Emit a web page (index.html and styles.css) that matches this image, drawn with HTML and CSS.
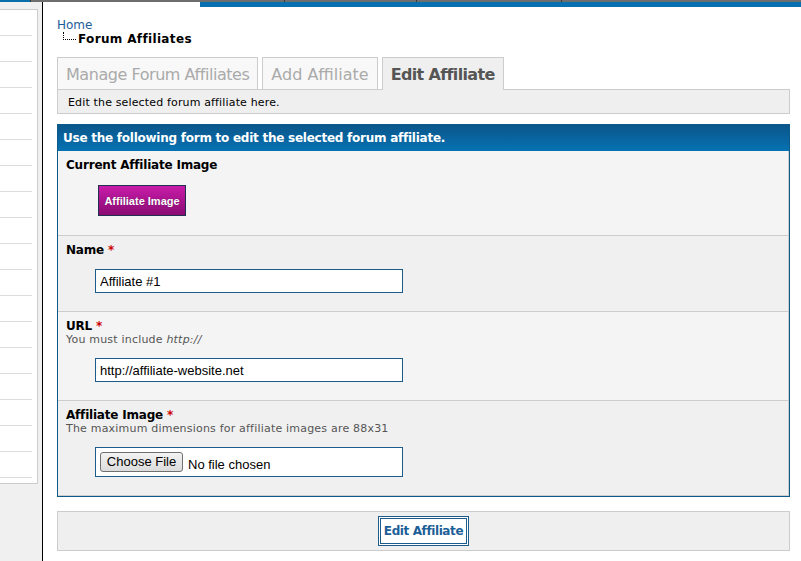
FILE: index.html
```html
<!DOCTYPE html>
<html lang="en">
<head>
<meta charset="utf-8">
<title>Edit Affiliate</title>
<link rel="stylesheet" href="styles.css">
</head>
<body>
<div class="topbar">
  <span class="seg seg-blue"></span><span class="seg seg-a"></span><span class="seg seg-b"></span><span class="seg seg-c"></span><span class="seg seg-d"></span>
</div>
<div class="layout">
  <aside class="sidebar">
    <ul class="side-list">
      <li></li><li></li><li></li><li></li><li></li><li></li>
      <li></li><li></li><li></li><li></li><li></li><li></li>
      <li></li><li></li><li></li><li></li><li></li><li></li>
    </ul>
  </aside>
  <main class="main">
    <div class="band"></div>
    <nav class="breadcrumb">
      <a class="crumb-home" href="#">Home</a>
      <div class="crumb-current"><span class="tree"></span><strong>Forum Affiliates</strong></div>
    </nav>
    <ul class="tabs">
      <li class="tab tab-manage">Manage Forum Affiliates</li>
      <li class="tab">Add Affiliate</li>
      <li class="tab active">Edit Affiliate</li>
    </ul>
    <div class="tab-desc">Edit the selected forum affiliate here.</div>
    <form class="form-box">
      <div class="form-head">Use the following form to edit the selected forum affiliate.</div>
      <div class="row row-light row-first">
        <div class="label">Current Affiliate Image</div>
        <div class="field field-img"><span class="aff-img">Affiliate Image</span></div>
      </div>
      <div class="row row-dark">
        <div class="label">Name <span class="req">*</span></div>
        <div class="field"><input class="text-input" type="text" value="Affiliate #1"></div>
      </div>
      <div class="row row-light">
        <div class="label">URL <span class="req">*</span></div>
        <div class="desc">You must include <em>http://</em></div>
        <div class="field"><input class="text-input" type="text" value="http://affiliate-website.net"></div>
      </div>
      <div class="row row-dark">
        <div class="label">Affiliate Image <span class="req">*</span></div>
        <div class="desc">The maximum dimensions for affiliate images are 88x31</div>
        <div class="field"><div class="file-box"><span class="file-btn">Choose File</span><span class="file-name">No file chosen</span></div></div>
      </div>
    </form>
    <div class="submit-bar"><button class="btn" type="button">Edit Affiliate</button></div>
  </main>
</div>
</body>
</html>
```

FILE: styles.css
```css
html, body {
  margin: 0;
  padding: 0;
  background: #fff;
}
body {
  font-family: "DejaVu Sans", Verdana, sans-serif;
  color: #000;
  height: 561px;
  overflow: hidden;
}

/* top strip */
.topbar {
  display: flex;
  height: 2px;
  background: #6e6e6e;
}
.seg { display: block; height: 2px; }
.seg-blue { width: 30px; background: #0a6eab; }
.seg-a { width: 253px; border-left: 1px solid #3a3a3a; }
.seg-b { width: 131px; border-left: 1px solid #3a3a3a; }
.seg-c { width: 144px; border-left: 1px solid #3a3a3a; }
.seg-d { flex: 1; border-left: 1px solid #3a3a3a; }

.layout {
  display: flex;
  height: 559px;
}

/* sidebar */
.sidebar {
  width: 42px;
  flex: none;
  background: #f0f0f0;
  border-right: 1px solid #000;
}
.side-list {
  list-style: none;
  margin: 7px 0 0;
  padding: 0 5px 5px 0;
  width: 32px;
  background: #fff;
  border: 1px solid #ccc;
  border-left: none;
}
.side-list li {
  height: 25px;
  border-bottom: 1px solid #ddd;
}

/* main */
.main {
  flex: 1;
  position: relative;
  padding: 16px 11px 0 14px;
}
.band {
  position: absolute;
  top: 0;
  right: 0;
  left: 157px;
  height: 5px;
  background: #0670b0;
}

.breadcrumb {
  font-size: 12px;
  line-height: 14px;
}
.crumb-home {
  color: #1b5c9b;
  text-decoration: none;
  display: block;
}
.crumb-current {
  display: flex;
  align-items: flex-start;
}
.tree {
  display: block;
  width: 12px;
  height: 7px;
  margin: 0 2px 0 6px;
  border-left: 1px dotted #000;
  border-bottom: 1px dotted #000;
}
.crumb-current strong {
  font-weight: bold;
  letter-spacing: 0.35px;
}

/* tabs */
.tabs {
  display: flex;
  gap: 4px;
  list-style: none;
  margin: 11px 0 0;
  padding: 0;
  height: 32px;
}
.tab {
  height: 31px;
  line-height: 33px;
  padding: 0 8px;
  font-size: 16px;
  color: #aaa;
  background: #f8f8f8;
  border: 1px solid #ccc;
  border-bottom: none;
  white-space: nowrap;
}
.tab-manage {
  letter-spacing: -0.45px;
}
.tab.active {
  position: relative;
  z-index: 1;
  height: 32px;
  color: #555;
  font-weight: bold;
  letter-spacing: -0.65px;
  background: #efefef;
}

.tab-desc {
  height: 20px;
  padding: 3px 10px 0;
  line-height: 20px;
  font-size: 11px;
  letter-spacing: 0.15px;
  background: #efefef;
  border: 1px solid #ccc;
}

/* form */
.form-box {
  margin: 10px 0 0;
  border: 1px solid #0b5a8a;
}
.form-head {
  height: 26px;
  line-height: 26px;
  padding: 0 5px;
  font-size: 12px;
  font-weight: bold;
  letter-spacing: -0.25px;
  color: #fff;
  background: linear-gradient(#0b568a, #0672b3);
}
.row {
  padding: 8px 8px 18px;
  border-bottom: 1px solid #ccc;
  border-right: 1px solid #ccc;
}
.row-first {
  padding-bottom: 19px;
}
.row-light { background: #f4f4f4; }
.row-dark { background: #f0f0f0; }
.label {
  font-size: 12px;
  line-height: 13px;
  font-weight: bold;
  letter-spacing: -0.2px;
}
.req { color: #cc0000; }
.desc {
  font-size: 11px;
  line-height: 13px;
  letter-spacing: 0.2px;
  color: #555;
}
.field {
  margin: 12px 0 0 29px;
}
.field-img {
  margin: 13px 0 0 32px;
  height: 31px;
}
.aff-img {
  display: flex;
  align-items: center;
  justify-content: center;
  box-sizing: border-box;
  width: 88px;
  height: 31px;
  border: 1px solid #22304f;
  background: linear-gradient(#c81ca9, #8a0b73);
  color: #fff;
  font-family: "Liberation Sans", Arial, sans-serif;
  font-size: 11px;
  font-weight: bold;
  text-shadow: 0 0 1px rgba(0,0,0,0.4);
}
.text-input {
  display: block;
  box-sizing: border-box;
  width: 308px;
  height: 24px;
  margin: 0;
  padding: 0 4px;
  border: 1px solid #1d5b8a;
  background: #fff;
  font-family: "Liberation Sans", Arial, sans-serif;
  font-size: 13px;
  color: #000;
  outline: none;
}
.file-box {
  display: flex;
  align-items: flex-start;
  box-sizing: border-box;
  width: 308px;
  height: 30px;
  padding: 4px;
  border: 1px solid #1d5b8a;
  background: #fff;
  font-family: "Liberation Sans", Arial, sans-serif;
  font-size: 13px;
}
.file-btn {
  display: block;
  box-sizing: border-box;
  width: 83px;
  height: 20px;
  line-height: 17px;
  text-align: center;
  border: 1px solid #707070;
  border-radius: 3px;
  background: linear-gradient(#f2f2f2, #dcdcdc);
  font-size: 13px;
}
.file-name {
  display: block;
  margin: 5px 0 0 5px;
  line-height: 15px;
  font-size: 13px;
}

/* submit */
.submit-bar {
  display: flex;
  justify-content: center;
  margin-top: 14px;
  padding: 4px 0;
  background: #efefef;
  border: 1px solid #ccc;
}
.btn {
  height: 30px;
  margin: 0;
  padding: 0 3px;
  border: 3px double #1d5b8a;
  background: #fff;
  color: #1d5f97;
  font-family: "DejaVu Sans", Verdana, sans-serif;
  font-size: 12px;
  font-weight: bold;
  letter-spacing: -0.4px;
}
```
